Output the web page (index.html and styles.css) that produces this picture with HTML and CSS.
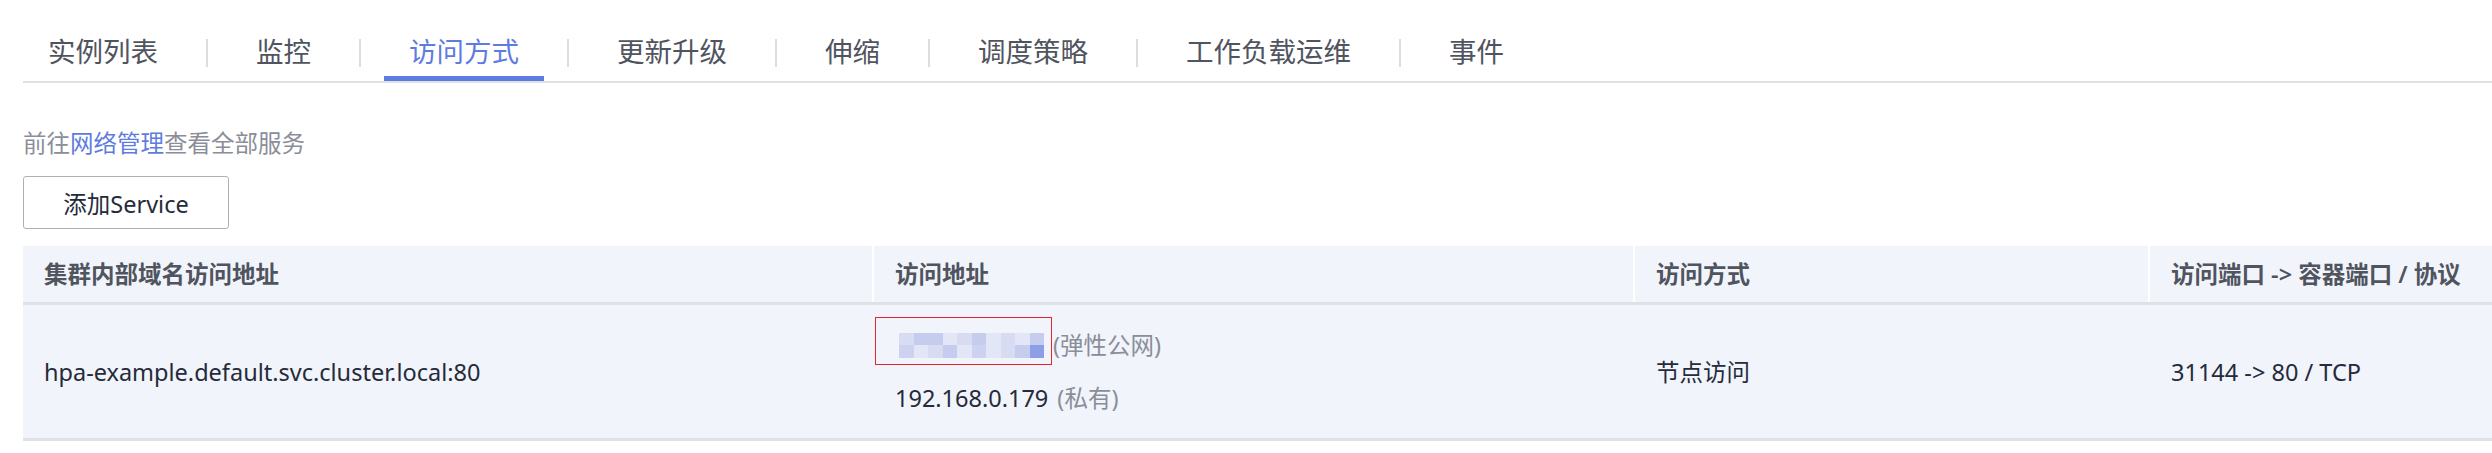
FILE: index.html
```html
<!DOCTYPE html>
<html lang="zh-CN">
<head>
<meta charset="utf-8">
<title>访问方式</title>
<link rel="stylesheet" href="styles.css">
</head>
<body>
<div class="page">
  <nav class="tabs">
    <div class="tab">实例列表</div><span class="sep"></span>
    <div class="tab">监控</div><span class="sep"></span>
    <div class="tab active">访问方式</div><span class="sep"></span>
    <div class="tab">更新升级</div><span class="sep"></span>
    <div class="tab">伸缩</div><span class="sep"></span>
    <div class="tab">调度策略</div><span class="sep"></span>
    <div class="tab">工作负载运维</div><span class="sep"></span>
    <div class="tab">事件</div>
  </nav>

  <p class="hint">前往<a class="link">网络管理</a>查看全部服务</p>

  <button class="btn">添加Service</button>

  <div class="table">
    <div class="thead">
      <div class="th">集群内部域名访问地址</div>
      <div class="th">访问地址</div>
      <div class="th">访问方式</div>
      <div class="th">访问端口 -&gt; 容器端口 / 协议</div>
    </div>
    <div class="tr">
      <div class="td">hpa-example.default.svc.cluster.local:80</div>
      <div class="td addrs">
        <div class="addr">
          <span class="mask">
            <i class="m2"></i><i class="m3"></i><i class="m3"></i><i class="m1"></i><i class="m2"></i><i class="m3"></i><i class="m1"></i><i class="m2"></i><i class="m1"></i><i class="m3"></i>
            <i class="m4"></i><i class="m1"></i><i class="m2"></i><i class="m3"></i><i class="m1"></i><i class="m4"></i><i class="m1"></i><i class="m2"></i><i class="m3"></i><i class="m5"></i>
          </span>
          <span class="muted">(弹性公网)</span>
          <span class="redbox"></span>
        </div>
        <div class="addr">192.168.0.179 <span class="muted">(私有)</span></div>
      </div>
      <div class="td">节点访问</div>
      <div class="td">31144 -&gt; 80 / TCP</div>
    </div>
  </div>
</div>
</body>
</html>
```

FILE: styles.css
```css
html, body {
  margin: 0;
  background: #ffffff;
}
body {
  font-family: "Noto Sans", "Noto Sans CJK SC", sans-serif;
  overflow: hidden;
  color: #252b3a;
}
.page {
  padding-left: 23px;
}

/* tabs */
.tabs {
  display: flex;
  align-items: flex-start;
  border-bottom: 2px solid #dfe1e6;
}
.tab {
  font-size: 27.5px;
  line-height: 40px;
  padding: 32px 25px 4px;
  border-bottom: 5px solid transparent;
  color: #50545f;
  white-space: nowrap;
}
.tab.active {
  color: #5e7ce0;
  border-bottom-color: #5e7ce0;
}
.sep {
  flex: none;
  width: 2px;
  height: 28px;
  margin: 39px 23px 0;
  background: #dcdde3;
}

/* hint line */
.hint {
  margin: 44px 0 0;
  font-size: 23.5px;
  line-height: 32px;
  color: #8a8e99;
}
.link {
  color: #5e7ce0;
}

/* button */
.btn {
  display: block;
  margin-top: 17px;
  width: 206px;
  height: 53px;
  padding: 0;
  border: 1.5px solid #adb0b8;
  border-radius: 3px;
  background: #ffffff;
  font-family: inherit;
  font-size: 23.5px;
  color: #252b3a;
}

/* table */
.table {
  margin-top: 17px;
}
.thead, .tr {
  display: grid;
  grid-template-columns: 849px 761px 515px 1fr;
  background: #f1f4fb;
  border-bottom: 3px solid #dfe1e6;
}
.th {
  height: 56px;
  line-height: 56px;
  padding: 0 21px;
  font-size: 23.5px;
  font-weight: 600;
  color: #50545f;
  white-space: nowrap;
  overflow: hidden;
}
.th + .th {
  border-left: 2px solid #ffffff;
}
.tr {
  align-items: center;
}
.td {
  padding: 24px 22px 24px 21px;
  font-size: 23.5px;
  line-height: 32px;
  color: #252b3a;
  white-space: nowrap;
}
.td + .td {
  padding-left: 23px;
}
.addrs {
  display: flex;
  flex-direction: column;
  gap: 21px;
}
.addr {
  position: relative;
  display: flex;
  align-items: center;
  gap: 9px;
}
.muted {
  color: #8a8e99;
}

/* pixelated IP */
.mask {
  display: grid;
  grid-template-columns: repeat(10, 14.5px);
  grid-template-rows: 12.5px 12.5px;
  margin-left: 4px;
}
.mask i { display: block; }
.m1 { background: #e3e6f6; }
.m2 { background: #d8dcf3; }
.m3 { background: #c6ccee; }
.m4 { background: #cdd2f0; }
.m5 { background: #8c9fe6; }

/* annotation box */
.redbox {
  position: absolute;
  left: -20px;
  top: -12px;
  width: 175px;
  height: 46px;
  border: 1.5px solid #e5242b;
}
```
